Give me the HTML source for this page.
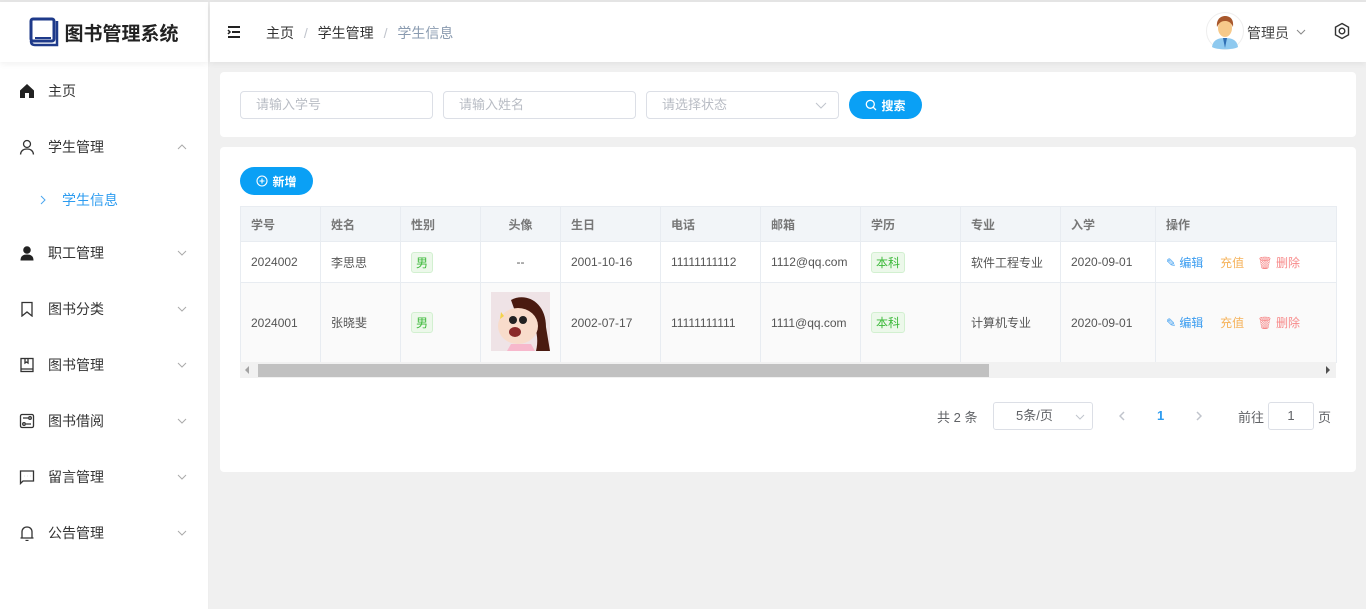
<!DOCTYPE html>
<html><head><meta charset="utf-8"><style>
*{box-sizing:border-box;margin:0;padding:0}
body{width:1366px;height:609px;overflow:hidden;background:#f0f0f0;font-family:"Liberation Sans","Noto Sans CJK SC",sans-serif;font-size:13px;color:#333;position:relative}
.topline{position:absolute;left:0;top:0;width:1366px;height:2px;background:#e6e6e6}
.side{position:absolute;left:0;top:2px;width:209px;height:607px;background:#fff;border-right:1px solid #eee}
.logo{height:60px;display:flex;align-items:center;justify-content:center;font-size:19px;font-weight:bold;color:#222;box-shadow:0 2px 6px rgba(0,0,0,.06)}
.mi{position:absolute;left:0;width:209px;height:20px;display:flex;align-items:center;font-size:14px;color:#333}
.mi svg.ic{position:absolute;left:19px}
.mi span{position:absolute;left:48px}
.mi .ar{position:absolute;left:177px}
.header{position:absolute;left:210px;top:2px;width:1156px;height:60px;background:#fff;box-shadow:0 2px 6px rgba(0,0,0,.06)}
.card{position:absolute;left:220px;width:1136px;background:#fff;border-radius:4px}
.inp{position:absolute;top:91px;height:28px;width:193px;border:1px solid #dcdfe6;border-radius:4px;font-size:13px;color:#b8bcc4;padding:0 15px;line-height:25px;background:#fff}
.btn{position:absolute;background:#0aa0f5;color:#fff;border-radius:14px;font-size:12px;font-weight:bold;display:flex;align-items:center;justify-content:center;gap:4px}
table{border-collapse:collapse;table-layout:fixed;position:absolute;left:240px;top:206px;width:1096px}
td,th{border:1px solid #e8ecf1;font-size:12px;color:#555;text-align:left;padding:0 10px;font-weight:normal;white-space:nowrap;overflow:hidden}
th{background:#f2f5f8;color:#777;height:35px;font-weight:bold}
.tag{display:inline-block;border:1px solid #d2f0d0;background:#ecf8ea;color:#3cb93a;border-radius:3px;padding:1px 4px;font-size:12px}
.op{font-size:12px}
</style></head><body>
<div class="topline"></div>
<div class="side">
 <div class="logo"><svg width="30" height="30" viewBox="0 0 30 30" style="margin-right:5px"><rect x="2" y="2" width="23" height="22" rx="2" fill="none" stroke="#1e3a8a" stroke-width="3"/><path d="M2 24 Q2 28 6 28 H28 V4" fill="none" stroke="#1e3a8a" stroke-width="2.5"/><path d="M6 21 H22" stroke="#1e3a8a" stroke-width="2"/></svg>图书管理系统</div>
 <div class="mi" style="top:79px"><svg class="ic" width="16" height="16" viewBox="0 0 16 16"><path d="M8 1 L15 7.5 V15 H10 V10 H6 V15 H1 V7.5Z" fill="#222"/></svg><span>主页</span></div>
 <div class="mi" style="top:135px"><svg class="ic" width="16" height="16" viewBox="0 0 16 16" fill="none" stroke="#333" stroke-width="1.3"><circle cx="8" cy="5" r="3.5"/><path d="M1.5 15.5 C2 11 5 10 8 10 C11 10 14 11 14.5 15.5"/></svg><span>学生管理</span><svg class="ar" width="10" height="6"><path d="M1 5 L5 1 L9 5" stroke="#aaa" fill="none"/></svg></div>
 <div class="mi" style="top:188px"><svg style="position:absolute;left:40px" width="7" height="10"><path d="M1 1 L5 5 L1 9" stroke="#4aa6f0" fill="none"/></svg><span style="left:62px;color:#2d9cf0">学生信息</span></div>
 <div class="mi" style="top:241px"><svg class="ic" width="16" height="16" viewBox="0 0 16 16"><circle cx="8" cy="5" r="3.8" fill="#222"/><path d="M1.5 15.5 C1.5 11 4 9.5 8 9.5 C12 9.5 14.5 11 14.5 15.5Z" fill="#222"/></svg><span>职工管理</span><svg class="ar" width="10" height="6"><path d="M1 1 L5 5 L9 1" stroke="#aaa" fill="none"/></svg></div>
 <div class="mi" style="top:297px"><svg class="ic" width="16" height="16" viewBox="0 0 16 16" fill="none" stroke="#333" stroke-width="1.3"><path d="M3 1.5 H13 V15 L8 11 L3 15Z"/></svg><span>图书分类</span><svg class="ar" width="10" height="6"><path d="M1 1 L5 5 L9 1" stroke="#aaa" fill="none"/></svg></div>
 <div class="mi" style="top:353px"><svg class="ic" width="16" height="16" viewBox="0 0 16 16" fill="none" stroke="#333" stroke-width="1.3"><rect x="2" y="1.5" width="12" height="13"/><path d="M2 12 H14 M6 1.5 V6 L7.5 5 L9 6 V1.5"/></svg><span>图书管理</span><svg class="ar" width="10" height="6"><path d="M1 1 L5 5 L9 1" stroke="#aaa" fill="none"/></svg></div>
 <div class="mi" style="top:409px"><svg class="ic" width="16" height="16" viewBox="0 0 16 16" fill="none" stroke="#333" stroke-width="1.3"><rect x="1.5" y="1.5" width="13" height="13" rx="1.5"/><path d="M4 5 H9 M7 11 H12"/><circle cx="11" cy="5" r="1.3"/><circle cx="5" cy="11" r="1.3"/></svg><span>图书借阅</span><svg class="ar" width="10" height="6"><path d="M1 1 L5 5 L9 1" stroke="#aaa" fill="none"/></svg></div>
 <div class="mi" style="top:465px"><svg class="ic" width="16" height="16" viewBox="0 0 16 16" fill="none" stroke="#333" stroke-width="1.3"><path d="M1.5 2 H14.5 V12 H4 L1.5 14.5Z"/><path d="M5 7h.1M8 7h.1M11 7h.1" stroke-width="1.6"/></svg><span>留言管理</span><svg class="ar" width="10" height="6"><path d="M1 1 L5 5 L9 1" stroke="#aaa" fill="none"/></svg></div>
 <div class="mi" style="top:521px"><svg class="ic" width="16" height="16" viewBox="0 0 16 16" fill="none" stroke="#333" stroke-width="1.3"><path d="M3 13 V7 C3 4 5 2 8 2 C11 2 13 4 13 7 V13 M1.5 13 H14.5 M6.5 15.5 H9.5"/></svg><span>公告管理</span><svg class="ar" width="10" height="6"><path d="M1 1 L5 5 L9 1" stroke="#aaa" fill="none"/></svg></div>
</div>
<div class="header">
 <svg style="position:absolute;left:17px;top:24px" width="14" height="12" viewBox="0 0 14 12"><path d="M1 1 H13 M5 6 H13 M1 11 H13" stroke="#222" stroke-width="2"/><path d="M1 4 L3 6 L1 8" stroke="#222" stroke-width="1.5" fill="none"/></svg>
 <div style="position:absolute;left:56px;top:21px;font-size:14px;color:#333">主页 <span style="color:#c0c4cc;margin:0 6px">/</span> 学生管理 <span style="color:#c0c4cc;margin:0 6px">/</span> <span style="color:#8a9bb0">学生信息</span></div>
 <svg style="position:absolute;left:996px;top:10px" width="38" height="38" viewBox="0 0 38 38"><circle cx="19" cy="19" r="18.5" fill="#fff" stroke="#eee"/><path d="M6 35 C7 28 12 26 19 26 C26 26 31 28 32 35 C28 38 10 38 6 35Z" fill="#8ec9ef"/><path d="M17 26 L19 36 L21 26Z" fill="#2f6fb4"/><ellipse cx="19" cy="16" rx="7" ry="9" fill="#f6c98a"/><path d="M11 15 C10 6 16 4 19 4 C24 4 28 7 27 15 C25 10 22 9 19 9 C15 9 13 11 11 15Z" fill="#a8582c"/></svg>
 <div style="position:absolute;left:1037px;top:21px;font-size:14px;color:#444">管理员</div>
 <svg style="position:absolute;left:1086px;top:27px" width="10" height="6"><path d="M1 1 L5 5 L9 1" stroke="#888" fill="none"/></svg>
 <svg style="position:absolute;left:1123px;top:20px" width="18" height="18" viewBox="0 0 18 18" fill="none" stroke="#333" stroke-width="1.4"><path d="M9 1.5 L15.5 5.2 V12.8 L9 16.5 L2.5 12.8 V5.2Z"/><circle cx="9" cy="9" r="2.8"/></svg>
</div>
<div class="card" style="top:72px;height:65px"></div>
<div class="inp" style="left:240px">请输入学号</div>
<div class="inp" style="left:443px">请输入姓名</div>
<div class="inp" style="left:646px">请选择状态<svg style="position:absolute;right:11px;top:10px" width="12" height="7"><path d="M1 1 L6 6 L11 1" stroke="#c0c4cc" fill="none"/></svg></div>
<div class="btn" style="left:849px;top:91px;width:73px;height:28px"><svg width="12" height="12" viewBox="0 0 12 12" fill="none" stroke="#fff" stroke-width="1.3"><circle cx="5.3" cy="5.3" r="4"/><path d="M8.3 8.3 L11 11"/></svg>搜索</div>
<div class="card" style="top:147px;height:325px"></div>
<div class="btn" style="left:240px;top:167px;width:73px;height:28px"><svg width="12" height="12" viewBox="0 0 12 12" fill="none" stroke="#fff" stroke-width="1.1"><circle cx="6" cy="6" r="5"/><path d="M6 3.5 V8.5 M3.5 6 H8.5"/></svg>新增</div>
<table>
<colgroup><col style="width:80px"><col style="width:80px"><col style="width:80px"><col style="width:80px"><col style="width:100px"><col style="width:100px"><col style="width:100px"><col style="width:100px"><col style="width:100px"><col style="width:95px"><col style="width:181px"></colgroup>
<tr><th>学号</th><th>姓名</th><th>性别</th><th style="text-align:center">头像</th><th>生日</th><th>电话</th><th>邮箱</th><th>学历</th><th>专业</th><th>入学</th><th style="box-shadow:-4px 0 6px rgba(0,0,0,.06)">操作</th></tr>
<tr style="height:41px"><td>2024002</td><td>李思思</td><td><span class="tag">男</span></td><td style="text-align:center">--</td><td>2001-10-16</td><td>11111111112</td><td>1112@qq.com</td><td><span class="tag">本科</span></td><td>软件工程专业</td><td>2020-09-01</td><td class="op" style="box-shadow:-4px 0 6px rgba(0,0,0,.06)"><span style="color:#3a9cf0">✎ 编辑</span>&nbsp;&nbsp;&nbsp;&nbsp;&nbsp;<span style="color:#f5b25a">充值</span>&nbsp;&nbsp;&nbsp;&nbsp;<span style="color:#f78a8a">🗑︎ 删除</span></td></tr>
<tr style="height:80px;background:#fafafa"><td>2024001</td><td>张晓斐</td><td><span class="tag">男</span></td><td style="padding:0 10px"><svg width="59" height="59" viewBox="0 0 59 59"><rect width="59" height="59" fill="#efe3e6"/><path d="M20 8 C35 0 55 10 55 35 L59 59 L45 59 C50 40 40 20 25 22Z" fill="#4a1a10"/><ellipse cx="27" cy="34" rx="20" ry="18" fill="#f8dccb"/><circle cx="22" cy="28" r="4" fill="#222"/><circle cx="32" cy="28" r="4" fill="#222"/><ellipse cx="24" cy="40" rx="6" ry="5" fill="#8a2a2a"/><path d="M20 52 L40 52 L44 59 L16 59Z" fill="#f7b8cc"/><path d="M10 20 L13 24 L9 27Z" fill="#f4d34a"/></svg></td><td>2002-07-17</td><td>11111111111</td><td>1111@qq.com</td><td><span class="tag">本科</span></td><td>计算机专业</td><td>2020-09-01</td><td class="op" style="box-shadow:-4px 0 6px rgba(0,0,0,.06)"><span style="color:#3a9cf0">✎ 编辑</span>&nbsp;&nbsp;&nbsp;&nbsp;&nbsp;<span style="color:#f5b25a">充值</span>&nbsp;&nbsp;&nbsp;&nbsp;<span style="color:#f78a8a">🗑︎ 删除</span></td></tr>
</table>
<div style="position:absolute;left:240px;top:362px;width:1096px;height:16px;background:#f1f1f1"><div style="position:absolute;left:18px;top:2px;width:731px;height:13px;background:#c1c1c1"></div><svg style="position:absolute;left:5px;top:4px" width="5" height="8"><path d="M4 0 L0 4 L4 8Z" fill="#a3a3a3"/></svg><svg style="position:absolute;right:5px;top:4px" width="5" height="8"><path d="M0 0 L4 4 L0 8Z" fill="#505050"/></svg></div>
<div style="position:absolute;left:937px;top:407px;font-size:13px;color:#606266">共 2 条</div>
<div style="position:absolute;left:993px;top:402px;width:100px;height:28px;border:1px solid #dcdfe6;border-radius:3px;font-size:13px;color:#606266;padding:0 0 0 22px;line-height:25px">5条/页<svg style="position:absolute;right:7px;top:11px" width="10" height="6"><path d="M1 1 L5 5 L9 1" stroke="#c0c4cc" fill="none"/></svg></div>
<svg style="position:absolute;left:1119px;top:411px" width="6" height="10"><path d="M5 1 L1 5 L5 9" stroke="#c0c4cc" fill="none" stroke-width="1.5"/></svg>
<div style="position:absolute;left:1157px;top:408px;font-size:13px;color:#2d9cf0;font-weight:bold">1</div>
<svg style="position:absolute;left:1196px;top:411px" width="6" height="10"><path d="M1 1 L5 5 L1 9" stroke="#c0c4cc" fill="none" stroke-width="1.5"/></svg>
<div style="position:absolute;left:1238px;top:407px;font-size:13px;color:#606266">前往</div>
<div style="position:absolute;left:1268px;top:402px;width:46px;height:28px;border:1px solid #dcdfe6;border-radius:3px;font-size:13px;color:#606266;text-align:center;line-height:25px">1</div>
<div style="position:absolute;left:1318px;top:407px;font-size:13px;color:#606266">页</div>
</body></html>
